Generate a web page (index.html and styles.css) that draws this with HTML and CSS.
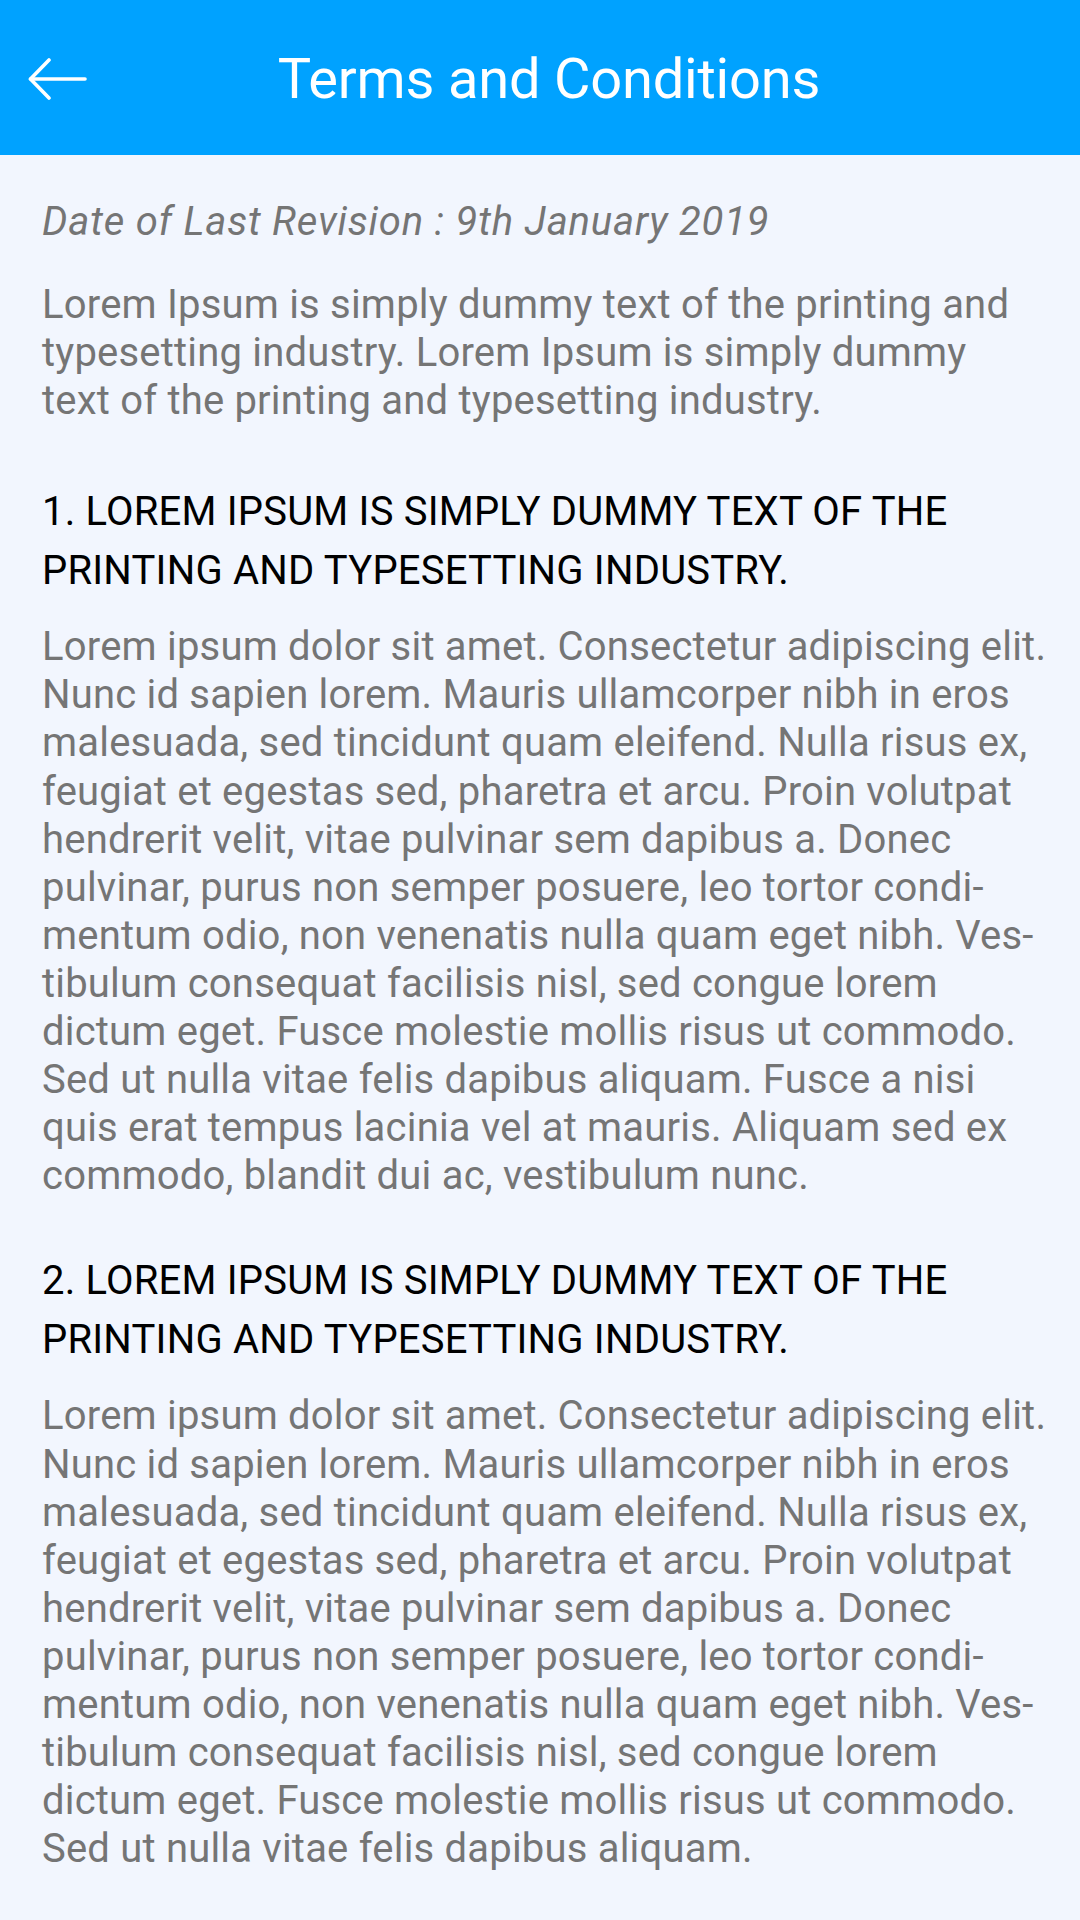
FILE: index.html
```html
<!DOCTYPE html>
<html lang="en">
<head>
<meta charset="utf-8">
<title>Terms and Conditions</title>
<link rel="stylesheet" href="styles.css">
</head>
<body>
<header class="appbar">
  <button class="back" aria-label="Back">
    <svg viewBox="0 0 60 42" width="60" height="42" aria-hidden="true">
      <path d="M2.5 21 H57" fill="none" stroke="#fff" stroke-width="3.6" stroke-linecap="round"/>
      <path d="M21 2 L2.5 21 L21 40" fill="none" stroke="#fff" stroke-width="3.6" stroke-linecap="round" stroke-linejoin="round"/>
    </svg>
  </button>
  <h1 class="title">Terms and Conditions</h1>
  <span class="spacer"></span>
</header>
<main class="content">
  <p class="revision">Date of Last Revision : 9th January 2019</p>
  <p class="text intro">Lorem Ipsum is simply dummy text of the printing and typesetting industry. Lorem Ipsum is simply dummy<br>text of the printing and typesetting industry.</p>

  <section class="section">
    <h2 class="heading">1. LOREM IPSUM IS SIMPLY DUMMY TEXT OF THE PRINTING AND TYPESETTING INDUSTRY.</h2>
    <p class="text">Lorem ipsum dolor sit amet. Consectetur adipiscing elit. Nunc id sapien lorem. Mauris ullamcorper nibh in eros malesuada, sed tincidunt quam eleifend. Nulla risus ex, feugiat et egestas sed, pharetra et arcu. Proin volutpat hendrerit velit, vitae pulvinar sem dapibus a. Donec pulvinar, purus non semper posuere, leo tortor condi&shy;mentum odio, non venenatis nulla quam eget nibh. Ves&shy;tibulum consequat facilisis nisl, sed congue lorem dictum eget. Fusce molestie mollis risus ut commodo. Sed ut nulla vitae felis dapibus aliquam. Fusce a nisi quis erat tempus lacinia vel at mauris. Aliquam sed ex commodo, blandit dui ac, vestibulum nunc.</p>
  </section>

  <section class="section second">
    <h2 class="heading">2. LOREM IPSUM IS SIMPLY DUMMY TEXT OF THE PRINTING AND TYPESETTING INDUSTRY.</h2>
    <p class="text">Lorem ipsum dolor sit amet. Consectetur adipiscing elit. Nunc id sapien lorem. Mauris ullamcorper nibh in eros malesuada, sed tincidunt quam eleifend. Nulla risus ex, feugiat et egestas sed, pharetra et arcu. Proin volutpat hendrerit velit, vitae pulvinar sem dapibus a. Donec pulvinar, purus non semper posuere, leo tortor condi&shy;mentum odio, non venenatis nulla quam eget nibh. Ves&shy;tibulum consequat facilisis nisl, sed congue lorem dictum eget. Fusce molestie mollis risus ut commodo. Sed ut nulla vitae felis dapibus aliquam.</p>
  </section>
</main>
</body>
</html>
```

FILE: styles.css
```css
* {
  box-sizing: border-box;
}

html, body {
  margin: 0;
  padding: 0;
}

body {
  width: 1080px;
  min-height: 1920px;
  background: #f2f6fe;
  font-family: Roboto, "Noto Sans", "Liberation Sans", sans-serif;
  color: #757575;
}

.appbar {
  height: 155px;
  background: #00a2ff;
  display: grid;
  grid-template-columns: 104px 1fr 86px;
  align-items: center;
}

.back {
  width: 104px;
  height: 155px;
  padding: 0 0 0 28px;
  margin: 0;
  border: 0;
  background: transparent;
  display: flex;
  align-items: center;
  justify-content: flex-start;
}

.back svg {
  display: block;
  margin-top: 3px;
}

.title {
  margin: 2px 0 0;
  font-size: 56px;
  font-weight: 400;
  letter-spacing: -0.2px;
  color: #ffffff;
  text-align: center;
  line-height: 66px;
}

.content {
  padding: 43px 30px 40px 42px;
}

.revision {
  margin: 0;
  font-size: 40px;
  line-height: 48px;
  font-style: italic;
  letter-spacing: 0.8px;
  color: #757575;
}

.text {
  margin: 0;
  font-size: 40px;
  line-height: 48.1px;
  letter-spacing: 0.2px;
  color: #757575;
  hyphens: manual;
}

.intro {
  margin-top: 35px;
}

.section {
  margin-top: 57px;
}

.section.second {
  margin-top: 51px;
}

.heading {
  margin: 0 0 23px;
  font-size: 40px;
  line-height: 59px;
  font-weight: 400;
  letter-spacing: 0.2px;
  color: #000000;
}
```
